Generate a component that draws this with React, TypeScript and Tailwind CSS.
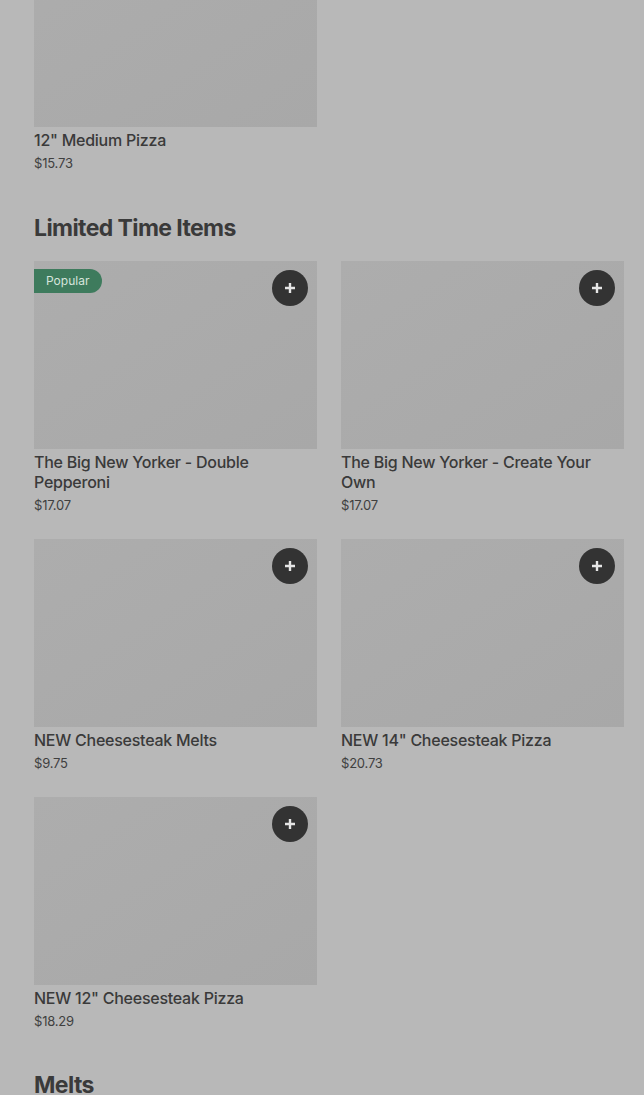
import React from "react";

type Item = { name: string; price: string; popular?: boolean };

const Plus = () => (
  <button className="absolute top-[9px] right-[9px] w-9 h-9 rounded-full bg-[#333333] flex items-center justify-center">
    <svg width="14" height="14" viewBox="0 0 14 14">
      <path d="M7 2v10M2 7h10" stroke="#e6e6e6" strokeWidth="2.4" />
    </svg>
  </button>
);

const Card = ({ item, button = true }: { item: Item; button?: boolean }) => (
  <div className="flex flex-col">
    <div className="relative h-[188px] bg-gradient-to-br from-[#adadad] to-[#a8a8a8]">
      {item.popular && (
        <div className="absolute top-2 left-0 h-6 w-[68px] rounded-r-full bg-[#3e7b5d] text-[#d6e4dc] text-[12px] leading-6 pl-3">
          Popular
        </div>
      )}
      {button && <Plus />}
    </div>
    <div className="mt-[3px] text-[16px] leading-5 font-medium tracking-[-0.25px] text-[#3a3a3a] pr-4">{item.name}</div>
    <div className="mt-[3px] text-[13px] leading-5 tracking-[-0.2px] text-[#3f3f3f]">{item.price}</div>
  </div>
);

const items: Item[] = [
  { name: "The Big New Yorker - Double Pepperoni", price: "$17.07", popular: true },
  { name: "The Big New Yorker - Create Your Own", price: "$17.07" },
  { name: "NEW Cheesesteak Melts", price: "$9.75" },
  { name: 'NEW 14" Cheesesteak Pizza', price: "$20.73" },
  { name: 'NEW 12" Cheesesteak Pizza', price: "$18.29" },
];

export default function App() {
  return (
    <div
      className="h-[1095px] overflow-hidden bg-[#b8b8b8] pl-[34px] pr-[20px]"
      style={{ fontFamily: "Inter, 'Noto Sans', sans-serif" }}
    >
      <div className="grid grid-cols-2 gap-x-6 -mt-[61px]">
        <Card item={{ name: '12" Medium Pizza', price: "$15.73" }} button={false} />
      </div>
      <h2 className="mt-[39px] text-[23px] leading-8 font-bold tracking-[-0.6px] text-[#3a3a3a]">Limited Time Items</h2>
      <div className="mt-[17px] grid grid-cols-2 gap-x-6 gap-y-6">
        {items.map((it) => (
          <Card key={it.name} item={it} />
        ))}
      </div>
      <h2 className="mt-[38px] text-[23px] leading-8 font-bold tracking-[-0.6px] text-[#3a3a3a]">Melts</h2>
    </div>
  );
}
